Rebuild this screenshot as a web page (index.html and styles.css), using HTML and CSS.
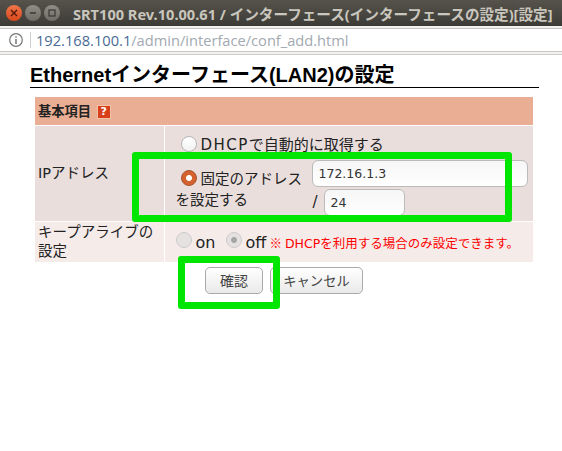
FILE: index.html
```html
<!DOCTYPE html>
<html lang="ja">

<head>
    <meta charset="UTF-8">
    <title>SRT100 Rev.10.00.61</title>
    <link rel="stylesheet" href="styles.css">
</head>

<body>
    <div class="titlebar">
        <div class="win-buttons">
            <span class="win-btn win-close">
                <svg width="8" height="8" viewBox="0 0 8 8"><path d="M1 1L7 7M7 1L1 7" stroke="#5a1a08" stroke-width="1.5"/></svg>
            </span>
            <span class="win-btn">
                <svg width="8" height="8" viewBox="0 0 8 8"><path d="M1 4H7" stroke="#3a3834" stroke-width="1.5"/></svg>
            </span>
            <span class="win-btn">
                <svg width="8" height="8" viewBox="0 0 8 8"><rect x="1" y="1" width="6" height="6" fill="none" stroke="#3a3834" stroke-width="1.2"/></svg>
            </span>
        </div>
        <div class="win-title">SRT100 Rev.10.00.61 / インターフェース(インターフェースの設定)[設定]</div>
    </div>

    <div class="addressbar">
        <div class="url-field">
            <svg class="info-icon" width="16" height="16" viewBox="0 0 16 16">
                <circle cx="8" cy="8" r="6.3" fill="none" stroke="#777" stroke-width="1.2"/>
                <path d="M8 7V12M8 4.2V5.8" stroke="#777" stroke-width="1.5"/>
            </svg>
            <span class="url-sep"></span>
            <span class="url-host">192.168.100.1</span><span class="url-path">/admin/interface/conf_add.html</span>
        </div>
    </div>

    <div class="page">
        <h1>Ethernetインターフェース(LAN2)の設定</h1>
        <form action="#">
            <table class="settings">
                <colgroup>
                    <col class="col-label">
                    <col class="col-value">
                </colgroup>
                <tr>
                    <th colspan="2" class="section-head">
                        基本項目 <span class="help-icon">?</span>
                    </th>
                </tr>
                <tr class="row-a">
                    <td class="label-cell">IPアドレス</td>
                    <td class="value-cell">
                        <div class="radio-line">
                            <span class="radio"></span>
                            <span><span class="wide">DHCP</span>で自動的に取得する</span>
                        </div>
                        <div class="static-line">
                            <div class="static-label">
                                <span class="radio radio-on"></span>固定のアドレスを設定する
                            </div>
                            <div class="static-inputs">
                                <input class="text-input ip-input" type="text" value="172.16.1.3">
                                <div class="mask-line">
                                    <span class="slash">/</span>
                                    <input class="text-input mask-input" type="text" value="24">
                                </div>
                            </div>
                        </div>
                    </td>
                </tr>
                <tr class="row-b">
                    <td class="label-cell">キープアライブの設定</td>
                    <td class="value-cell">
                        <div class="keepalive">
                            <span class="radio radio-off"></span>
                            <span class="ka-text">on</span>
                            <span class="radio radio-off radio-dot"></span>
                            <span class="ka-text">off</span>
                            <span class="note"><span class="note-mark">※</span> DHCPを利用する場合のみ設定できます。</span>
                        </div>
                    </td>
                </tr>
            </table>
            <div class="button-disp">
                <button type="button" class="btn btn-ok">確認</button>
                <button type="button" class="btn btn-cancel">キャンセル</button>
            </div>
        </form>
    </div>

    <div class="mark mark-ip"></div>
    <div class="mark mark-ok"></div>
</body>

</html>
```

FILE: styles.css
```css
* {
    box-sizing: border-box;
}

html,
body {
    height: 451px;
    overflow: hidden;
}

body {
    margin: 0;
    position: relative;
    background-color: #fff;
    color: #222;
    font-family: "DejaVu Sans", "Noto Sans CJK JP", sans-serif;
    font-size: 14.5px;
}

.titlebar {
    display: flex;
    align-items: center;
    height: 26px;
    padding-left: 6px;
    background: linear-gradient(#56534c, #3d3b36);
}

.win-buttons {
    display: flex;
    gap: 3px;
}

.win-btn {
    display: flex;
    align-items: center;
    justify-content: center;
    width: 16px;
    height: 16px;
    border-radius: 50%;
    background: linear-gradient(#908d85, #6f6c65);
}

.win-close {
    background: linear-gradient(#f0764a, #d8481c);
}

.win-title {
    margin-left: 13px;
    color: #c9c6bd;
    font-family: "Noto Sans", "Noto Sans CJK JP", sans-serif;
    font-size: 14.6px;
    font-weight: 700;
    white-space: nowrap;
}

.addressbar {
    height: 29px;
    padding: 2px 0;
    background-color: #f2f1f0;
    border-bottom: 1px solid #cfcdc9;
}

.url-field {
    display: flex;
    align-items: center;
    height: 24px;
    padding-left: 8px;
    background-color: #fff;
    border-top: 1px solid #c8c6c2;
    border-bottom: 1px solid #c8c6c2;
    font-family: "Open Sans", sans-serif;
    font-size: 14.65px;
}

.url-sep {
    width: 1px;
    height: 16px;
    margin: 0 5px 0 6px;
    background-color: #ccc;
}

.url-host {
    color: #4a6a94;
}

.url-path {
    color: #a3a9b0;
}

.page {
    padding: 8px 23px 0 30px;
}

h1 {
    margin: 0;
    height: 25px;
    border-bottom: 1px solid #000;
    color: #000;
    font-family: "Liberation Sans", "Noto Sans CJK JP", sans-serif;
    font-size: 20px;
    line-height: 24px;
    font-weight: 700;
}

form {
    margin: 9px 6px 0 5px;
}

.settings {
    width: 498px;
    border-collapse: collapse;
    table-layout: fixed;
}

.col-label {
    width: 129px;
}

.section-head {
    height: 28px;
    padding: 0 3px;
    background-color: #e9ae93;
    border-bottom: 1px solid #fff;
    font-size: 13.25px;
    font-weight: 700;
    text-align: left;
}

.help-icon {
    display: inline-block;
    width: 14px;
    height: 14px;
    margin-left: 1px;
    background-color: #d8401c;
    border: 1px solid #f3c0a8;
    color: #fff;
    font-size: 11px;
    line-height: 12px;
    text-align: center;
    vertical-align: 1px;
}

.label-cell {
    padding: 0 3px;
    border-right: 1px solid #fff;
    line-height: 19px;
}

.row-a td {
    height: 96px;
    background-color: #e9dedc;
    border-bottom: 1px solid #fff;
}

.row-b td {
    height: 40px;
    background-color: #f5ecea;
}

.value-cell {
    padding: 0 0 0 11px;
    vertical-align: top;
}

.radio-line {
    display: flex;
    align-items: center;
    gap: 4px;
    margin: 8px 0 0 5px;
    height: 20px;
    font-size: 15px;
}

.wide {
    letter-spacing: 1.5px;
}

.radio {
    display: inline-block;
    flex: none;
    width: 16px;
    height: 16px;
    border-radius: 50%;
    background: linear-gradient(#fff, #f2f2f2);
    border: 1px solid #b5b5b5;
}

.radio-on {
    background: radial-gradient(circle, #fff 0 2.5px, #d4622f 3.5px);
    border-color: #a8552f;
    vertical-align: -2px;
    margin: 0 4px 0 5px;
}

.radio-off {
    background: #e4e1e0;
    border-color: #ccc;
}

.radio-dot {
    background: radial-gradient(circle, #a5a5a5 0 2.5px, #e4e1e0 3.5px);
}

.static-line {
    display: flex;
    margin-top: 6px;
}

.static-label {
    flex: none;
    width: 136px;
    padding-top: 9px;
    line-height: 21px;
}

.ip-input {
    display: block;
    width: 216px;
}

.mask-line {
    display: flex;
    align-items: center;
    margin-top: 2px;
}

.slash {
    width: 12px;
    padding-left: 1px;
    font-size: 15px;
}

.text-input {
    height: 27px;
    padding: 0 6px;
    background: linear-gradient(#f6f6f6, #fff);
    border: 1px solid #bbb;
    border-radius: 6px;
    color: #333;
    font-family: "DejaVu Sans", sans-serif;
    font-size: 12.5px;
}

.mask-input {
    width: 81px;
}

.keepalive {
    display: flex;
    align-items: center;
    height: 40px;
    padding-bottom: 3px;
}

.ka-text {
    margin: 4px 0 0 4px;
    width: 30px;
    font-size: 16px;
}

.note {
    margin: 5px 0 0 -6px;
    color: #f00;
    font-size: 12.5px;
    white-space: nowrap;
}

.note-mark {
    font-family: "Noto Sans CJK JP", sans-serif;
    letter-spacing: -1px;
}

.button-disp {
    display: flex;
    gap: 7px;
    margin: 5px 0 0 170px;
}

.btn {
    height: 27px;
    padding: 0;
    background: linear-gradient(#fff, #e9e9e9);
    border: 1px solid #aaa;
    border-radius: 5px;
    color: #444;
    font-family: "DejaVu Sans", "Noto Sans CJK JP", sans-serif;
    font-size: 14px;
}

.btn-ok {
    width: 58px;
}

.btn-cancel {
    width: 93px;
    font-size: 13.3px;
}

/* annotation boxes drawn on top of the screenshot */
.mark {
    position: absolute;
    border: 7px solid #00e600;
    border-radius: 3px;
}

.mark-ip {
    left: 132px;
    top: 152px;
    width: 380px;
    height: 70px;
}

.mark-ok {
    left: 178px;
    top: 256px;
    width: 102px;
    height: 53px;
}
```
